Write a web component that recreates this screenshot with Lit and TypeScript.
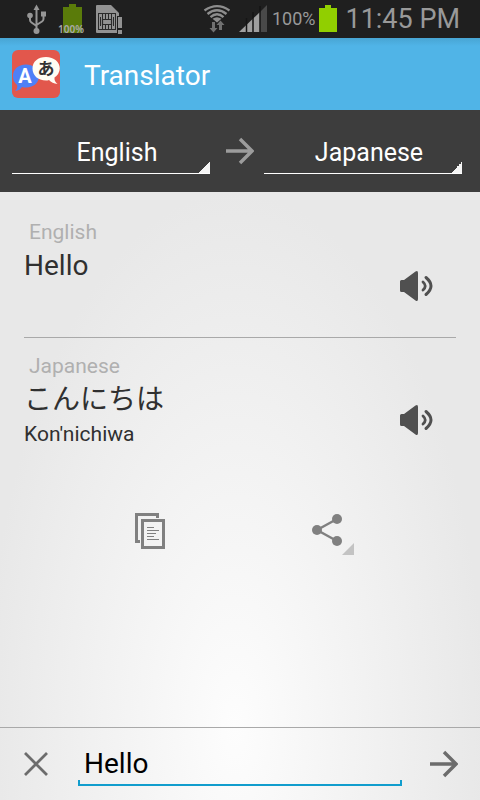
import { LitElement, html, css, svg } from "lit";
import { customElement, property, state } from "lit/decorators.js";

const LANGUAGES = ["English", "Japanese"];

const arrow = svg`<path d="M0 14H25M14 2L26 14L14 26" fill="none" stroke="currentColor" stroke-width="3.4"/>`;

@customElement("status-bar")
class StatusBar extends LitElement {
  static styles = css`
    :host {
      display: flex;
      justify-content: space-between;
      height: 38px;
      background: #1f1f1f;
      color: #999;
      font-family: Roboto, "Liberation Sans", sans-serif;
    }
    .group {
      display: flex;
      align-items: center;
    }
    .left {
      padding-left: 26px;
      gap: 8px;
    }
    .right {
      padding-right: 20px;
      gap: 4px;
    }
    svg {
      display: block;
    }
    .charge {
      position: relative;
    }
    .badge {
      position: absolute;
      left: 0;
      right: 0;
      bottom: 4px;
      text-align: center;
      font: 600 10px/10px "Noto Sans", sans-serif;
      color: #aaa;
    }
    .level {
      font-size: 18px;
      line-height: 38px;
    }
    .time {
      font-size: 27px;
      line-height: 38px;
      margin-left: 4px;
    }
  `;

  render() {
    return html`
      <div class="group left">
        <svg width="20" height="38" viewBox="0 0 20 38" fill="none" stroke="#969696" stroke-width="2">
          <path d="M10.500 9V31M4 15.500V20Q4 21.500 5.500 22.500L10.500 26M17.500 15V19Q17.500 20.500 16 21.500L10.500 25" />
          <path d="M10.500 4.500L13.500 10H7.500Z" fill="#969696" stroke="none" />
          <circle cx="10.500" cy="31" r="3" fill="#969696" stroke="none" />
          <circle cx="4" cy="15.500" r="2.800" fill="#969696" stroke="none" />
          <path d="M15 11.500H20V16.500H15Z" fill="#969696" stroke="none" />
        </svg>
        <div class="charge">
          <svg width="34" height="38" viewBox="0 0 34 38">
            <path d="M15 4H22V7H28V33H9V7H15Z" fill="#5a7b0a" />
          </svg>
          <span class="badge">100%</span>
        </div>
        <svg width="28" height="38" viewBox="0 0 28 38">
          <path d="M0 6Q0 5 1 5H15L23 13V32Q23 33 22 33H1Q0 33 0 32Z" fill="#929292" />
          <path d="M2 13H20V30H2Z" fill="#2a2a2a" />
          <path d="M3 14H19V29H3Z" fill="#929292" />
          <path d="M6.500 14V19M9.500 14V19M12.500 14V19M15.500 14V19M6.500 24V29M9.500 24V29M12.500 24V29M15.500 24V29M4.500 17V26M17.500 17V26" stroke="#2a2a2a" stroke-width="1" fill="none" />
          <path d="M6.500 19.500H15.500V24.500H6.500Z" fill="#929292" stroke="#2a2a2a" stroke-width="1.200" />
          <path d="M21 16H27V35H21Z" fill="#1f1f1f" />
          <path d="M22 17H26V28H22ZM22 30H26V34H22Z" fill="#929292" />
        </svg>
      </div>
      <div class="group right">
        <svg width="28" height="38" viewBox="0 0 28 38">
          <g fill="none" stroke="#8d8d8d" stroke-width="2.400">
            <path d="M2.500 10.500Q15 1.800 27.500 10.500" />
            <path d="M5.500 14Q15 6.500 24.500 14" />
            <path d="M8.500 17.200Q15 11.500 21.500 17.200" />
          </g>
          <path d="M10.500 18.800Q15 15.500 19.500 18.800L15 22.500Z" fill="#8d8d8d" />
          <path d="M10 22H13V28H15.500L11.500 32.500L7.500 28H10Z" fill="#707070" />
          <path d="M17 30V25H14.500L18.500 20.500L22.500 25H20V30Z" fill="#707070" />
        </svg>
        <svg width="34" height="38" viewBox="0 0 34 38">
          <path d="M5 32L26 12V32Z" fill="#a0a0a0" />
          <path d="M26 12L33 5V32H26Z" fill="#494949" />
          <path d="M12.500 18V32M19 12V32M26 6V32" stroke="#151515" stroke-width="1.500" />
        </svg>
        <span class="level">100%</span>
        <svg width="18" height="38" viewBox="0 0 18 38">
          <path d="M6 5H12V8H18V32H0V8H6Z" fill="#91cf00" />
        </svg>
        <span class="time">11:45 PM</span>
      </div>
    `;
  }
}

@customElement("translation-row")
class TranslationRow extends LitElement {
  @property() language = "";
  @property() text = "";
  @property() reading = "";

  static styles = css`
    :host {
      display: flex;
      justify-content: space-between;
      align-items: flex-start;
      min-height: 133px;
      box-sizing: border-box;
      padding-top: 14px;
      color: #303030;
      font-family: Roboto, "Noto Sans CJK JP", sans-serif;
    }
    h2,
    p {
      margin: 0;
      font-weight: 400;
    }
    .label {
      padding-left: 5px;
      font-size: 21px;
      line-height: 28px;
      color: #b0b0b0;
    }
    .text {
      font-size: 28px;
      line-height: 40px;
    }
    .reading {
      font-size: 21px;
      line-height: 28px;
    }
    button {
      width: 48px;
      height: 48px;
      margin: 44px 16px 0 0;
      padding: 0;
      border: 0;
      background: none;
      color: #505050;
    }
    svg {
      display: block;
    }
  `;

  render() {
    return html`
      <div>
        <h2 class="label">${this.language}</h2>
        <p class="text">${this.text}</p>
        ${this.reading ? html`<p class="reading">${this.reading}</p>` : null}
      </div>
      <button aria-label="Listen in ${this.language}">
        <svg width="48" height="48" viewBox="0 0 48 48">
          <path d="M8 19.500Q8 18 9.500 18H12L23.500 9.500Q26 8 26 11V37Q26 40 23.500 38.500L12 30H9.500Q8 30 8 28.500Z" fill="currentColor" />
          <g fill="none" stroke="currentColor" stroke-linecap="round">
            <path d="M31 20Q35.500 24 31 28" stroke-width="2.800" />
            <path d="M34 15.500Q44 24 34 32.500" stroke-width="3" />
          </g>
        </svg>
      </button>
    `;
  }
}

@customElement("app-root")
class AppRoot extends LitElement {
  @state() private source = "English";
  @state() private target = "Japanese";

  static styles = css`
    :host {
      display: flex;
      flex-direction: column;
      min-height: 100vh;
      font-family: Roboto, "Noto Sans CJK JP", sans-serif;
      background: #e8e8e8;
    }
    header {
      display: flex;
      align-items: center;
      gap: 24px;
      height: 72px;
      padding: 0 12px;
      background: linear-gradient(#48a5d3, #50b4e7 8px);
      color: #fff;
    }
    h1 {
      margin: 0;
      padding-top: 4px;
      font-size: 28px;
      line-height: 36px;
      font-weight: 400;
    }
    svg {
      display: block;
    }
    .logo-a {
      font: 700 20px Roboto, sans-serif;
    }
    .logo-ja {
      font: 700 17px "Noto Sans CJK JP", sans-serif;
    }
    .languages {
      display: flex;
      align-items: flex-start;
      height: 82px;
      box-sizing: border-box;
      padding: 20px 18px 0 12px;
      background: #3d3d3d;
      color: #9c9c9c;
    }
    select {
      flex: 1;
      min-width: 0;
      height: 44px;
      box-sizing: border-box;
      margin: 0;
      padding: 2px 0 0 12px;
      border: 0;
      border-bottom: 1px solid #fff;
      border-radius: 0;
      appearance: none;
      background: linear-gradient(135deg, transparent 50%, #f5f5f5 50%) right bottom / 11px 11px no-repeat;
      color: #fff;
      font: 25px Roboto, sans-serif;
      text-align: center;
      text-align-last: center;
    }
    .direction {
      width: 54px;
      padding: 7px 0 0 16px;
      box-sizing: border-box;
    }
    .page {
      flex: 1;
      display: flex;
      flex-direction: column;
      background: radial-gradient(ellipse 52% 88% at 49% 88%, #fdfdfd, #e8e8e8);
    }
    main {
      flex: 1;
      padding: 12px 24px 0;
    }
    .divided {
      border-bottom: 1px solid #a9a9a9;
      min-height: 134px;
    }
    .actions {
      display: flex;
      justify-content: space-around;
      padding: 36px 36px 0;
    }
    button {
      padding: 0;
      border: 0;
      background: none;
      color: #808080;
    }
    .entry {
      display: flex;
      align-items: center;
      height: 72px;
      border-top: 1px solid #a9a9a9;
    }
    .entry button {
      display: grid;
      place-items: center;
      width: 72px;
      height: 72px;
      color: #6c6c6c;
    }
    input {
      flex: 1;
      min-width: 0;
      height: 44px;
      box-sizing: border-box;
      margin: 0 6px;
      padding: 0 6px;
      border: 0;
      border-bottom: 2px solid #119dcd;
      border-radius: 0;
      outline: 0;
      background:
        linear-gradient(#119dcd, #119dcd) left bottom / 2px 4px no-repeat,
        linear-gradient(#119dcd, #119dcd) right bottom / 2px 4px no-repeat;
      color: #000;
      font: 28px Roboto, sans-serif;
    }
  `;

  private options(selected: string) {
    return LANGUAGES.map((l) => html`<option ?selected=${l === selected}>${l}</option>`);
  }

  render() {
    return html`
      <status-bar></status-bar>
      <header>
        <svg width="48" height="48" viewBox="0 0 48 48" aria-hidden="true">
          <rect width="48" height="48" rx="6" fill="#e2574c" />
          <path d="M14 14.500C22 14.500 27 19.500 27 26S22 37.500 14 37.500Q12 37.500 10 37Q8 40.500 3 41Q6 38.500 5 35C2 32.500 1 29.500 1 26C1 19.500 6 14.500 14 14.500Z" fill="#4f80f7" />
          <path d="M34 7C42 7 47.800 12 47.800 18.500Q47.500 24 42.500 27.500Q42 31 45.500 34Q40 33.500 37 30Q35.500 30.500 34 30.500C26 30.500 20.500 25.500 20.500 18.500S26 7 34 7Z" fill="#fffdf3" />
          <text class="logo-a" x="13" y="33" text-anchor="middle" fill="#fff">A</text>
          <text class="logo-ja" x="34" y="25" text-anchor="middle" fill="#333">あ</text>
        </svg>
        <h1>Translator</h1>
      </header>
      <div class="languages">
        <select aria-label="Source language" @change=${(e: Event) => (this.source = (e.target as HTMLSelectElement).value)}>
          ${this.options(this.source)}
        </select>
        <div class="direction">
          <svg width="28" height="28" viewBox="0 0 28 28" aria-hidden="true">${arrow}</svg>
        </div>
        <select aria-label="Target language" @change=${(e: Event) => (this.target = (e.target as HTMLSelectElement).value)}>
          ${this.options(this.target)}
        </select>
      </div>
      <div class="page">
        <main>
          <translation-row class="divided" language=${this.source} text="Hello"></translation-row>
          <translation-row language=${this.target} text="こんにちは" reading="Kon'nichiwa"></translation-row>
          <div class="actions">
            <button aria-label="Copy">
              <svg width="48" height="48" viewBox="0 0 48 48" fill="none" stroke="currentColor">
                <path d="M31.500 11V7.500H10.500V34.500H14" stroke-width="3" />
                <path d="M16.500 13.500H37.500V40.500H16.500Z" stroke-width="3" />
                <path d="M21 20.500H28M21 23.500H33M21 26.500H30M21 29.500H28M21 32.500H33" stroke-width="1" />
              </svg>
            </button>
            <button aria-label="Share">
              <svg width="48" height="48" viewBox="0 0 48 48">
                <path d="M31 12L11 23L31 34" fill="none" stroke="currentColor" stroke-width="2.400" />
                <g fill="currentColor">
                  <circle cx="31" cy="12" r="5" />
                  <circle cx="11" cy="23" r="5" />
                  <circle cx="31" cy="34" r="5" />
                </g>
                <path d="M48 36V48H36Z" fill="#c3c3c3" />
              </svg>
            </button>
          </div>
        </main>
        <div class="entry">
          <button aria-label="Clear">
            <svg width="24" height="24" viewBox="0 0 24 24">
              <path d="M1 1L23 23M23 1L1 23" stroke="currentColor" stroke-width="2.800" />
            </svg>
          </button>
          <input aria-label="Text to translate" .value=${"Hello"} />
          <button aria-label="Translate">
            <svg width="28" height="28" viewBox="0 0 28 28">${arrow}</svg>
          </button>
        </div>
      </div>
    `;
  }
}
